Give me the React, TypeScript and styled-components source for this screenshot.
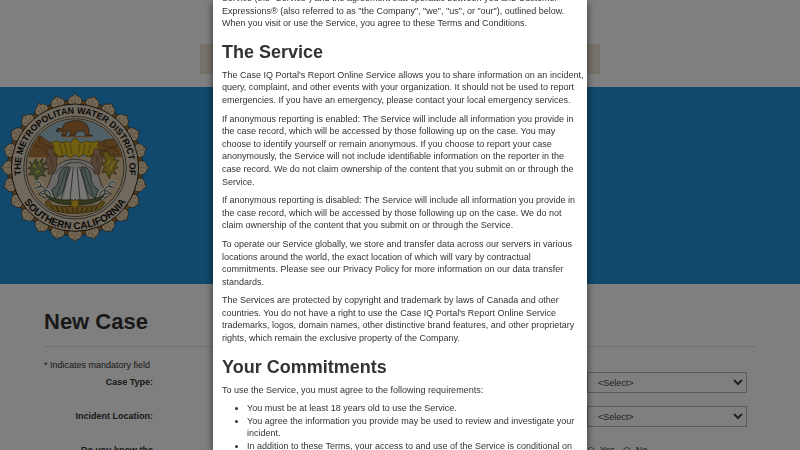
import React from "react";
import styled, { createGlobalStyle } from "styled-components";

const GlobalStyle = createGlobalStyle`
  * { box-sizing: border-box; }
  html, body { margin: 0; height: 100%; overflow: hidden; }
  body {
    background: #fff;
    color: #333;
    font-family: "Liberation Sans", Arial, sans-serif;
    font-size: 9px;
    line-height: 1.4;
  }
`;

const Page = styled.div`
  height: 100vh;
  overflow: hidden;
`;

const TopBar = styled.header`
  display: flex;
  justify-content: center;
  align-items: flex-end;
  height: 87px;
  padding-bottom: 13px;
`;

const Notice = styled.div`
  width: 50%;
  height: 30px;
  background: #efe4d2;
`;

const Banner = styled.div`
  height: 197px;
  padding-top: 5px;
  background: #2292dc;
`;

const Seal = styled.svg`
  display: block;
  width: 150px;
  height: 153px;
`;

const Content = styled.main`
  margin: 0 44px;
  padding-top: 22px;
`;

const PageTitle = styled.h1`
  margin: 0;
  padding-bottom: 9px;
  border-bottom: 1px solid #e0e0e0;
  font-size: 22px;
  line-height: 31px;
`;

const Hint = styled.p`
  margin: 12px 0 0;
  line-height: 13px;
`;

const Row = styled.div`
  display: grid;
  grid-template-columns: 109px 160px;
  justify-content: space-between;
  align-items: start;
  margin-right: 9px;
  margin-bottom: 13px;
`;

const Label = styled.label`
  padding-top: 4px;
  text-align: right;
  font-weight: bold;
  line-height: 13px;
`;

const Select = styled.select`
  width: 100%;
  height: 21px;
  padding: 0 0 0 6px;
  border: 1px solid #b8b8b8;
  border-radius: 0;
  background: #fff;
  color: #444;
  font: inherit;
`;

const Choices = styled.div`
  display: flex;
  gap: 8px;
  padding-top: 4px;
`;

const Choice = styled.label`
  display: flex;
  align-items: center;
  gap: 5px;
  line-height: 13px;
`;

const Radio = styled.input`
  width: 8px;
  height: 8px;
  margin: 0;
`;

const Backdrop = styled.div`
  position: fixed;
  inset: 0;
  display: flex;
  justify-content: center;
  background: rgba(0, 0, 0, 0.5);
`;

const Dialog = styled.section`
  width: 374px;
  max-width: 100%;
  padding: 0 2px 0 9px;
  overflow: hidden;
  background: #fff;
  box-shadow: 0 2px 8px rgba(0, 0, 0, 0.6);
`;

const Terms = styled.div`
  margin-top: -8px;
`;

const Heading = styled.h2`
  margin: 10px 0 4px;
  font-size: 18px;
  line-height: 25px;
`;

const Text = styled.p`
  margin: 0 0 6px;
`;

const List = styled.ul`
  margin: 0;
  padding-left: 25px;
`;

const INK = "#2a2218";
const CX = 225;
const CY = 247;
const steps = Array.from({ length: 24 }, (_, i) => i * 15);

function DistrictSeal() {
  return (
    <Seal viewBox="0 20 450 459" role="img" aria-label="The Metropolitan Water District of Southern California">
      <defs>
        <path id="sealTop" d="M 77 316 A 163 163 0 1 1 373 316" />
        <path id="sealBottom" d="M 52 310 A 184 184 0 0 0 398 310" />
        <clipPath id="sealClip"><circle cx={CX} cy={CY} r="144" /></clipPath>
      </defs>
      <circle cx={CX} cy={CY} r="203" fill="#9c7038" stroke={INK} strokeWidth="2" />
      {steps.map((a) => (
        <g key={a} transform={`rotate(${a} ${CX} ${CY})`}>
          <path d="M225 24 L230 31 Q246 34 246 50 L238 62 H212 L204 50 Q204 34 220 31 Z" fill="#e6d0ac" stroke="#4a3a24" strokeWidth="2" />
          <path d="M225 32 V60 M212 42 L218 52 M238 42 L232 52" fill="none" stroke="#a98a5c" strokeWidth="2" />
        </g>
      ))}
      <circle cx={CX} cy={CY} r="191" fill="#dfd3bc" stroke={INK} strokeWidth="3" />
      <circle cx={CX} cy={CY} r="154" fill="#dfd3bc" stroke={INK} strokeWidth="2" />
      <circle cx={CX} cy={CY} r="147" fill="#dfc79c" stroke={INK} strokeWidth="2" />
      <g clipPath="url(#sealClip)" strokeLinejoin="round">
        <rect x="75" y="95" width="300" height="120" fill="#9fc0cf" />
        <path d="M75 190 L100 162 L121 151 L145 169 L180 183 L190 216 L75 222 Z M272 187 L315 164 L340 161 L375 190 V218 H270 Z" fill="#ad7838" stroke="#5a3c1c" strokeWidth="2" />
        <path d="M94 176 L125 187 L148 213 M121 152 L117 170 L160 188 M318 166 L310 180 L342 188 L360 210 M340 162 L352 182 L282 204" fill="none" stroke="#684521" strokeWidth="2" />
        <rect x="75" y="216" width="300" height="180" fill="#e0c99f" />
        <path d="M188 128 Q193 108 208 110 Q232 101 252 111 Q267 118 268 148 L278 151 H256 L253 137 L230 138 L225 151 H209 L212 138 L201 137 L198 151 H185 L190 136 L179 139 L174 132 Z" fill="#ad7138" stroke="#4c3018" strokeWidth="2" />
        <path d="M172 128 L178 132 L168 136 L176 141" fill="none" stroke={INK} strokeWidth="3" />
        <path d="M186 154 H276" stroke="#b07f45" strokeWidth="4" />
        <path d="M153 171 L171 167 L186 173 L201 167 L213 173 L218 162 L228 158 L234 165 L242 173 L260 167 L276 171 L300 166 L292 181 L301 190 L284 202 L265 215 L249 207 L238 216 L225 208 L211 217 L195 208 L178 215 L166 203 L150 198 L163 186 Z" fill="#e0bd22" stroke="#71580c" strokeWidth="2" />
        <path d="M177 176 L188 206 M193 175 L202 207 M211 177 L216 206 M239 177 L235 207 M255 177 L250 208 M272 177 L263 210" fill="none" stroke="#7d6412" strokeWidth="2" />
        <path d="M116 326 Q142 318 152 280 Q160 224 225 221 Q290 224 298 280 Q308 318 334 326 Q300 354 225 356 Q150 354 116 326 Z" fill="#d6d3cf" stroke={INK} strokeWidth="2" />
        <path d="M155 313 Q178 302 177 270 Q184 241 207 245 L190 318 L165 340 Z M295 313 Q272 302 273 270 Q266 241 243 245 L260 318 L285 340 Z" fill="#94aca9" stroke={INK} strokeWidth="2" />
        <path d="M212 246 L238 246 Q248 292 262 346 H188 Q204 292 212 246 Z" fill="#f1efeb" />
        <path d="M212 245 Q196 292 184 340 M220 245 L210 343 M231 245 L240 343 M238 245 Q254 289 266 340 M198 248 Q188 288 170 330 M252 248 Q262 288 280 330" fill="none" stroke="#5b6664" strokeWidth="3" />
        <path d="M168 262 Q176 246 190 243 Q207 229 225 232 Q247 228 261 243 Q275 246 283 262" fill="none" stroke="#8d8983" strokeWidth="4" />
        <path d="M146 207 Q135 193 149 188 Q166 190 161 207 L171 218 L169 247 L162 266 H144 L145 246 L135 233 Z M282 207 Q276 192 290 189 Q306 194 299 209 L309 219 L301 250 L298 266 H284 L282 247 L271 228 Z" fill="#b18a6c" stroke="#5d4838" strokeWidth="2" />
        <path d="M151 208 V236 M158 212 V262 M289 207 V233 M294 212 V262" stroke="#7a5b45" strokeWidth="2" />
        <path d="M87 229 L99 237 L107 220 L113 235 L128 219 L125 236 L139 232 L128 247 L143 250 L128 262 L138 273 L119 270 L109 287 L102 268 L85 269 L96 254 L83 249 L96 242 Z" fill="#7d8b52" stroke="#3d4226" strokeWidth="2" />
        <path d="M306 203 L322 196 L331 211 L344 208 L343 223 L357 225 L346 239 L354 248 L340 251 L349 267 L334 262 L328 280 L318 260 L305 262 L313 245 L305 235 L318 228 Z" fill="#b79a2c" stroke="#4a421c" strokeWidth="2" />
        <path d="M99 237 L107 246 M118 232 L122 243 M106 262 L119 256 M330 222 L322 239 M343 228 L329 254" stroke="#e3c83e" strokeWidth="5" />
        {[false, true].map((mirror) => (
          <g key={String(mirror)} transform={mirror ? "translate(450 0) scale(-1 1)" : undefined}>
            <path d="M103 294 Q115 283 122 296 Q124 306 113 305 M105 309 Q131 295 136 314 Q137 331 123 324 M120 322 Q144 306 151 327 Q151 338 139 336" fill="none" stroke="#f3f0e3" strokeWidth="10" />
            <path d="M103 294 Q115 283 122 296 Q124 306 113 305 M105 309 Q131 295 136 314 Q137 331 123 324 M120 322 Q144 306 151 327 Q151 338 139 336" fill="none" stroke="#4a5f60" strokeWidth="3" />
            <path d="M133 323 Q157 348 217 343 L216 357 Q157 362 133 323 Z" fill="#667043" stroke="#343b20" strokeWidth="2" />
          </g>
        ))}
        <path d="M136 350 L145 345 L158 360 Q188 366 216 363 H242 Q271 365 293 358 L306 345 L315 352 L301 370 L282 377 Q225 392 165 377 L142 369 Z" fill="#b38c34" stroke="#4f3b17" strokeWidth="2" />
        <path d="M153 363 L161 374 M168 364 L177 378 M184 366 L191 380 M199 367 L206 382 M216 368 L221 382 M233 368 L231 382 M248 367 L243 381 M263 367 L257 380 M278 365 L272 377 M293 361 L286 374" stroke="#5f481c" strokeWidth="3" />
        <path d="M225 340 L229 347 L238 345 L235 355 L241 361 L231 363 L225 371 L219 363 L209 361 L215 355 L211 345 L221 347 Z" fill="#e0b529" stroke="#66520f" strokeWidth="2" />
      </g>
      <g fill="#171411" fontFamily="'Liberation Sans', sans-serif" fontWeight="bold" textAnchor="middle">
        <text fontSize="27"><textPath href="#sealTop" startOffset="50%">THE METROPOLITAN WATER DISTRICT OF</textPath></text>
        <text fontSize="30"><textPath href="#sealBottom" startOffset="50%">SOUTHERN CALIFORNIA</textPath></text>
      </g>
    </Seal>
  );
}

const serviceTerms = [
  "The Case IQ Portal's Report Online Service allows you to share information on an incident, query, complaint, and other events with your organization. It should not be used to report emergencies. If you have an emergency, please contact your local emergency services.",
  "If anonymous reporting is enabled: The Service will include all information you provide in the case record, which will be accessed by those following up on the case. You may choose to identify yourself or remain anonymous. If you choose to report your case anonymously, the Service will not include identifiable information on the reporter in the case record. We do not claim ownership of the content that you submit on or through the Service.",
  "If anonymous reporting is disabled: The Service will include all information you provide in the case record, which will be accessed by those following up on the case. We do not claim\u00a0ownership of the content that you submit on or through the Service.",
  "To operate our Service globally, we store and transfer data across our servers in various locations around the world, the exact location of which will vary by contractual commitments. Please see our Privacy Policy for more information on our data transfer standards.",
  "The Services are protected by copyright and trademark by laws of Canada and other countries. You do not have a right to use the Case IQ Portal's Report Online Service trademarks, logos, domain names, other distinctive brand features, and other proprietary rights, which remain the exclusive property of the Company.",
];

const selectFields = [
  { id: "caseType", label: "Case Type:" },
  { id: "incidentLocation", label: "Incident Location:" },
];

export default function App() {
  return (
    <>
      <GlobalStyle />
      <Page>
        <TopBar><Notice /></TopBar>
        <Banner><DistrictSeal /></Banner>
        <Content>
          <PageTitle>New Case</PageTitle>
          <Hint>* Indicates mandatory field</Hint>
          {selectFields.map((f) => (
            <Row key={f.id}>
              <Label htmlFor={f.id}>{f.label}</Label>
              <Select id={f.id}><option>&lt;Select&gt;</option></Select>
            </Row>
          ))}
          <Row role="radiogroup" aria-labelledby="knowLabel">
            <Label as="span" id="knowLabel">Do you know the</Label>
            <Choices>
              <Choice><Radio type="radio" name="know" />Yes</Choice>
              <Choice><Radio type="radio" name="know" />No</Choice>
            </Choices>
          </Row>
        </Content>
      </Page>
      <Backdrop>
        <Dialog role="dialog" aria-modal="true" aria-label="Terms and Conditions">
          <Terms>
            <Text>
              Service (the "Service") and the agreement that operates between you and Customer Expressions® (also
              referred to as "the Company", "we", "us", or "our"), outlined below. When you visit or use the Service,
              you agree to these Terms and Conditions.
            </Text>
            <Heading>The Service</Heading>
            {serviceTerms.map((t) => <Text key={t}>{t}</Text>)}
            <Heading>Your Commitments</Heading>
            <Text>To use the Service, you must agree to the following requirements:</Text>
            <List>
              <li>You must be at least 18 years old to use the Service.</li>
              <li>You agree the information you provide may be used to review and investigate your incident.</li>
              <li>In addition to these Terms, your access to and use of the Service is conditional on</li>
            </List>
          </Terms>
        </Dialog>
      </Backdrop>
    </>
  );
}
